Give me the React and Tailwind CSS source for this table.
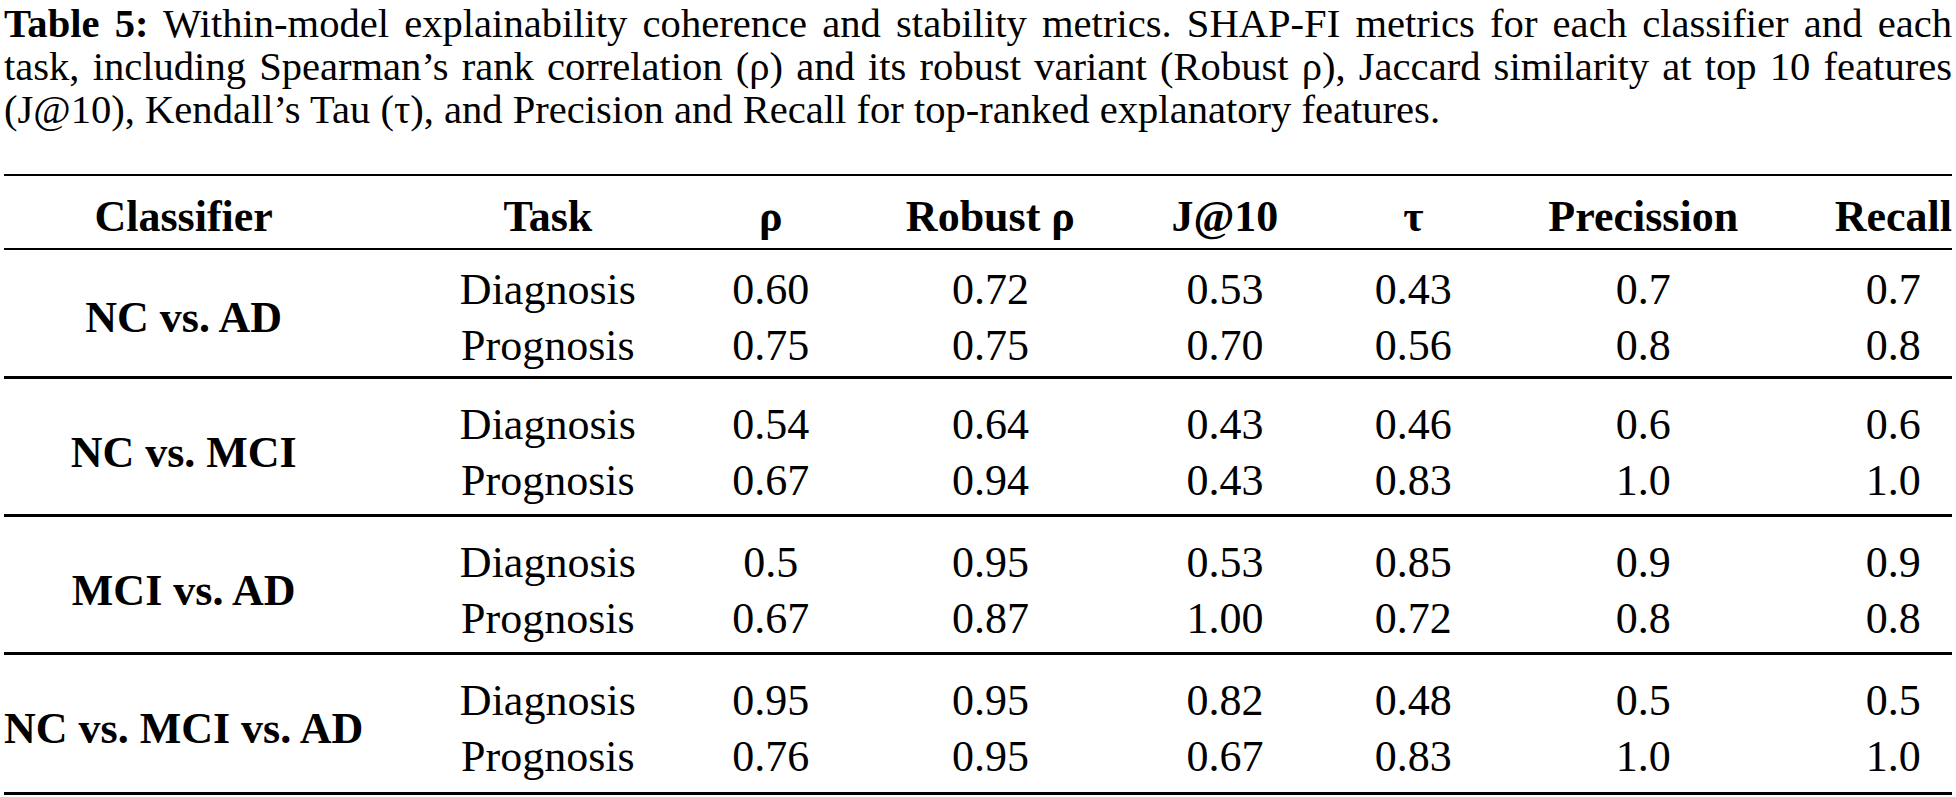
const headers = ['Classifier', 'Task', 'ρ', 'Robust ρ', 'J@10', 'τ', 'Precission', 'Recall'];

const groups = [
  {
    name: 'NC vs. AD',
    top: 'pt-[12px]',
    bottom: 'pb-[2px]',
    rule: 'h-[2px]',
    rows: [
      ['Diagnosis', '0.60', '0.72', '0.53', '0.43', '0.7', '0.7'],
      ['Prognosis', '0.75', '0.75', '0.70', '0.56', '0.8', '0.8'],
    ],
  },
  {
    name: 'NC vs. MCI',
    top: 'pt-[18px]',
    bottom: 'pb-[5px]',
    rule: 'h-[3px]',
    rows: [
      ['Diagnosis', '0.54', '0.64', '0.43', '0.46', '0.6', '0.6'],
      ['Prognosis', '0.67', '0.94', '0.43', '0.83', '1.0', '1.0'],
    ],
  },
  {
    name: 'MCI vs. AD',
    top: 'pt-[18px]',
    bottom: 'pb-[5px]',
    rule: 'h-[3px]',
    rows: [
      ['Diagnosis', '0.5', '0.95', '0.53', '0.85', '0.9', '0.9'],
      ['Prognosis', '0.67', '0.87', '1.00', '0.72', '0.8', '0.8'],
    ],
  },
  {
    name: 'NC vs. MCI vs. AD',
    top: 'pt-[18px]',
    bottom: 'pb-[7px]',
    rule: 'h-[3px]',
    rows: [
      ['Diagnosis', '0.95', '0.95', '0.82', '0.48', '0.5', '0.5'],
      ['Prognosis', '0.76', '0.95', '0.67', '0.83', '1.0', '1.0'],
    ],
  },
];

const App = () => {
  return (
    <div className="bg-white text-black px-[4px] pt-[2px] font-['Liberation_Serif',serif] w-[1956px] h-[797px] overflow-hidden">
      {/* caption */}
      <div className="text-[40.6px] leading-[43px]">
        <div className="whitespace-nowrap text-justify [text-align-last:justify]">
          <span className="font-bold">Table 5:</span> Within-model explainability coherence and stability metrics. SHAP-FI metrics for each classifier and each
        </div>
        <div className="whitespace-nowrap text-justify [text-align-last:justify]">
          task, including Spearman’s rank correlation (ρ) and its robust variant (Robust ρ), Jaccard similarity at top 10 features
        </div>
        <div className="whitespace-nowrap">
          (J@10), Kendall’s Tau (τ), and Precision and Recall for top-ranked explanatory features.
        </div>
      </div>

      {/* table */}
      <div className="mt-[43px] grid grid-cols-[repeat(8,auto)] justify-between text-[44px] whitespace-nowrap">
        <div className="col-span-8 h-[2px] bg-black" />
        {headers.map((h) => (
          <div key={h} className="pt-[17px] pb-[7px] leading-[48px] font-bold text-center">
            {h}
          </div>
        ))}
        {groups.map((g) => (
          <div key={g.name} className="contents">
            <div className={`col-span-8 bg-black ${g.rule}`} />
            <div className={`row-span-2 flex items-center justify-center font-bold leading-[56px] ${g.top} ${g.bottom}`}>
              {g.name}
            </div>
            {g.rows[0].map((v, i) => (
              <div key={'a' + i} className={`text-center leading-[56px] ${g.top}`}>
                {v}
              </div>
            ))}
            {g.rows[1].map((v, i) => (
              <div key={'b' + i} className={`text-center leading-[56px] ${g.bottom}`}>
                {v}
              </div>
            ))}
          </div>
        ))}
        <div className="col-span-8 h-[3px] bg-black" />
      </div>
    </div>
  );
};

export default App;
